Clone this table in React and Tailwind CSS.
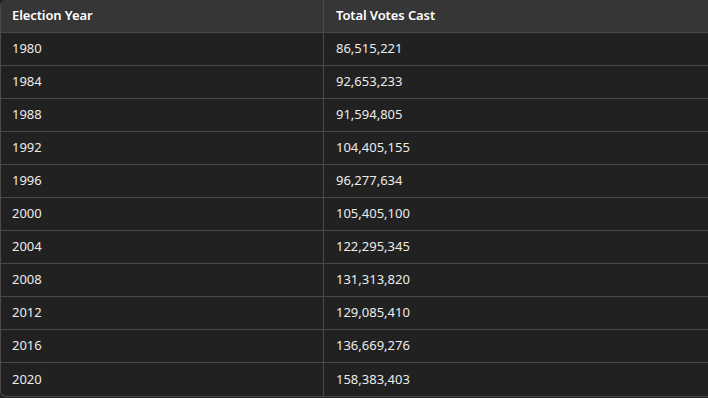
import React from "react";

const rows = [
  ["1980", "86,515,221"],
  ["1984", "92,653,233"],
  ["1988", "91,594,805"],
  ["1992", "104,405,155"],
  ["1996", "96,277,634"],
  ["2000", "105,405,100"],
  ["2004", "122,295,345"],
  ["2008", "131,313,820"],
  ["2012", "129,085,410"],
  ["2016", "136,669,276"],
  ["2020", "158,383,403"],
];

export default function App() {
  return (
    <div className="w-[708px] h-[398px] overflow-hidden bg-[#212121]" style={{ fontFamily: '"Noto Sans", "Open Sans", sans-serif' }}>
      <div className="w-[720px] rounded-md border-b border-l border-[#4a4a4a] overflow-hidden">
        <div className="grid grid-cols-[323px_1fr] h-[33px] bg-[#363636] border-b border-[#4a4a4a] text-[13px] font-semibold text-white tracking-[-0.1px]">
          <div className="pl-[11px] flex items-center border-r border-[#4a4a4a]">Election Year</div>
          <div className="pl-3 flex items-center">Total Votes Cast</div>
        </div>
        {rows.map(([y, v], i) => (
          <div
            key={y}
            className={`grid grid-cols-[323px_1fr] h-[33px] text-[13px] text-[#ececec] ${i < rows.length - 1 ? "border-b border-[#4a4a4a]" : ""}`}
          >
            <div className="pl-[11px] flex items-center border-r border-[#4a4a4a]">{y}</div>
            <div className="pl-3 flex items-center">{v}</div>
          </div>
        ))}
      </div>
    </div>
  );
}
